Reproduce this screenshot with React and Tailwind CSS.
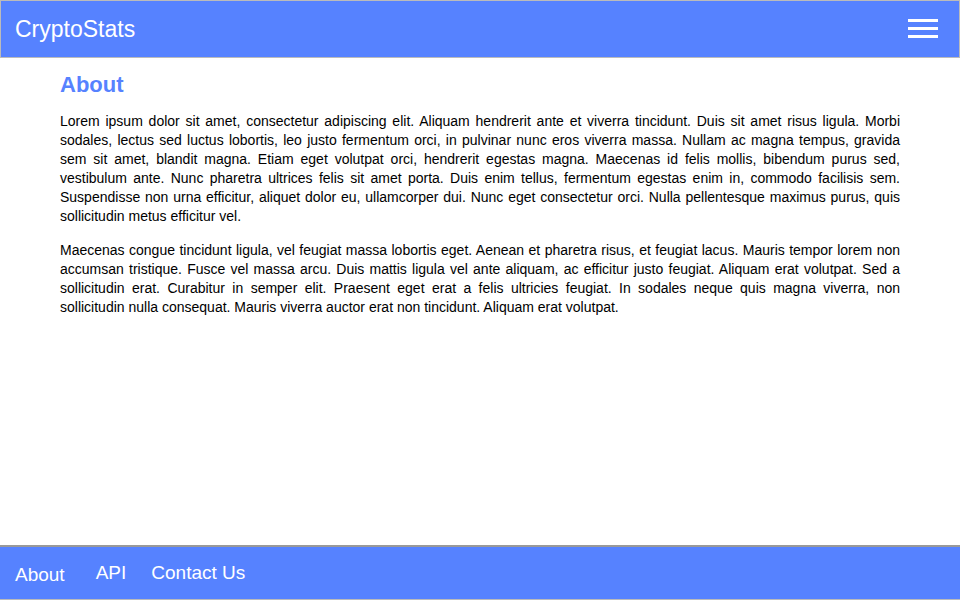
import React from 'react';

const aboutText = [
	"Lorem ipsum dolor sit amet, consectetur adipiscing elit. Aliquam hendrerit ante et viverra tincidunt. Duis sit amet risus ligula. Morbi sodales, lectus sed luctus lobortis, leo justo fermentum orci, in pulvinar nunc eros viverra massa. Nullam ac magna tempus, gravida sem sit amet, blandit magna. Etiam eget volutpat orci, hendrerit egestas magna. Maecenas id felis mollis, bibendum purus sed, vestibulum ante. Nunc pharetra ultrices felis sit amet porta. Duis enim tellus, fermentum egestas enim in, commodo facilisis sem. Suspendisse non urna efficitur, aliquet dolor eu, ullamcorper dui. Nunc eget consectetur orci. Nulla pellentesque maximus purus, quis sollicitudin metus efficitur vel.",
	"Maecenas congue tincidunt ligula, vel feugiat massa lobortis eget. Aenean et pharetra risus, et feugiat lacus. Mauris tempor lorem non accumsan tristique. Fusce vel massa arcu. Duis mattis ligula vel ante aliquam, ac efficitur justo feugiat. Aliquam erat volutpat. Sed a sollicitudin erat. Curabitur in semper elit. Praesent eget erat a felis ultricies feugiat. In sodales neque quis magna viverra, non sollicitudin nulla consequat. Mauris viverra auctor erat non tincidunt. Aliquam erat volutpat.",
]

const Header = () => {
	return (
			<header className="h-[58px] flex items-center justify-between bg-[#5682ff] border border-[#bbbbbb] pl-[14px] pr-[21px]">
				<div className="text-white text-[23px]">CryptoStats</div>
				<button type="button" className="flex flex-col gap-[5px] w-[30px] -mt-[1px]">
					<span className="block h-[3px] w-[30px] bg-white"></span>
					<span className="block h-[3px] w-[30px] bg-white"></span>
					<span className="block h-[3px] w-[30px] bg-white"></span>
				</button>
			</header>
	);
};

const Footer = () => {
	return (
			<footer className="h-[55px] flex items-center bg-[#5682ff] border-t-2 border-t-[#999999] border-b border-b-[#bbbbbb] pl-[15px] text-white text-[19px]">
				<a className="pt-[4px]">About</a>
				<a className="ml-[31px]">API</a>
				<a className="ml-[25px]">Contact Us</a>
			</footer>
	);
};

const App = () => {
	return (
			<div className="min-h-screen flex flex-col bg-white font-['Liberation_Sans',Arial,sans-serif]">
				<Header/>
				<main className="flex-1 px-[60px] pt-[14px]">
					<h2 className="text-[22px] font-bold text-[#5682ff] leading-[25px] mb-[15px]">About</h2>
					{aboutText.map((t, i) =>
							<p key={i} className="text-[14px] leading-[19px] text-black text-justify mb-[15px]">{t}</p>
					)}
				</main>
				<Footer/>
			</div>
	);
};

export default App;
